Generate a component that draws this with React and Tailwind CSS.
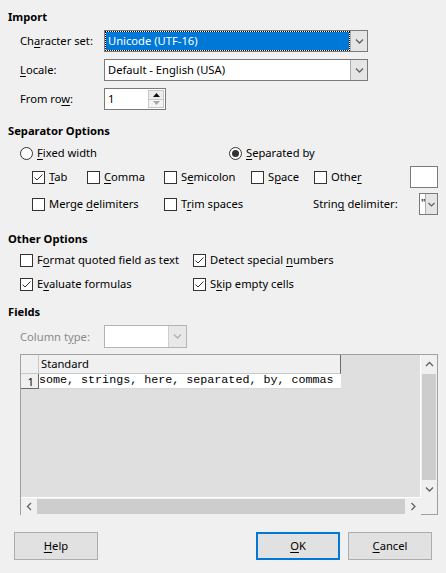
import React from 'react';

// Mnemonic label: underlines one letter like a Windows dialog does.
const Mn = ({ text, at }) => (
    <span className="whitespace-nowrap">
        {text.slice(0, at)}
        <span className="underline underline-offset-[2px]">{text[at]}</span>
        {text.slice(at + 1)}
    </span>
);

const Chevron = ({ dir = 'down', color = '#606060' }) => {
    const d = {
        down: 'M1 1.5 L4.5 5 L8 1.5',
        up: 'M1 5 L4.5 1.5 L8 5',
        left: 'M5 1 L1.5 4.5 L5 8',
        right: 'M1.5 1 L5 4.5 L1.5 8',
    }[dir];
    const box = dir === 'left' || dir === 'right' ? '0 0 7 9' : '0 0 9 7';
    const w = dir === 'left' || dir === 'right' ? 7 : 9;
    const h = dir === 'left' || dir === 'right' ? 9 : 7;
    return (
        <svg width={w} height={h} viewBox={box}>
            <path d={d} fill="none" stroke={color} strokeWidth="1.3" />
        </svg>
    );
};

const Checkbox = ({ checked }) => (
    <span className="w-[13px] h-[13px] shrink-0 border border-[#333333] bg-white flex items-center justify-center">
        {checked && (
            <svg width="11" height="11" viewBox="0 0 11 11">
                <path d="M1.5 5.5 L4 8 L9.5 2.5" fill="none" stroke="#333333" strokeWidth="1" />
            </svg>
        )}
    </span>
);

const Radio = ({ checked }) => (
    <span className="w-[13px] h-[13px] shrink-0 rounded-full border border-[#333333] bg-white flex items-center justify-center">
        {checked && <span className="w-[7px] h-[7px] rounded-full bg-[#333333]" />}
    </span>
);

const CheckItem = ({ checked, children, className = '' }) => (
    <div className={`flex items-center gap-[4px] ${className}`}>
        <Checkbox checked={checked} />
        {children}
    </div>
);

const Combo = ({ value, selected, className = '' }) => (
    <div className={`h-[22px] flex border border-[#7a7a7a] bg-white ${className}`}>
        {selected ? (
            <div className="flex-1 m-[1px] bg-[#0078d7] text-white outline-1 outline-dotted outline-black flex items-center pl-[2px]">
                {value}
            </div>
        ) : (
            <div className="flex-1 flex items-center pl-[3px]">{value}</div>
        )}
        <div className="w-[17px] bg-[#e5e5e5] border-l border-[#adadad] flex items-center justify-center">
            <Chevron />
        </div>
    </div>
);

const Heading = ({ children, className = '' }) => (
    <div className={`font-bold leading-[16px] ${className}`}>{children}</div>
);

const Button = ({ children, primary }) => (
    <button
        className={`w-[84px] h-[28px] bg-[#e1e1e1] flex items-center justify-center ${primary ? 'border-2 border-[#0078d7]' : 'border border-[#adadad]'}`}
    >
        {children}
    </button>
);

export default function App() {
    return (
        <div className="w-[446px] h-[573px] bg-[#f0f0f0] text-[11.2px] text-black font-['Noto_Sans',sans-serif] flex flex-col leading-[16px]">
            <div className="pl-[8px] pr-[8px] pt-[9px] flex flex-col">
                {/* Import */}
                <Heading>Import</Heading>
                <div className="pl-[12px] mt-[5px] flex flex-col gap-[7px]">
                    <div className="flex items-center">
                        <div className="w-[84px]"><Mn text="Character set:" at={2} /></div>
                        <Combo value="Unicode (UTF-16)" selected className="w-[264px]" />
                    </div>
                    <div className="flex items-center">
                        <div className="w-[84px]"><Mn text="Locale:" at={0} /></div>
                        <Combo value="Default - English (USA)" className="w-[264px]" />
                    </div>
                    <div className="flex items-center">
                        <div className="w-[84px]"><Mn text="From row:" at={7} /></div>
                        <div className="w-[62px] h-[22px] border border-[#7a7a7a] bg-white flex items-center pl-[3px]">
                            <span className="flex-1">1</span>
                            <div className="w-[16px] h-[18px] mr-[1px] flex flex-col border border-[#c8c8c8]">
                                <div className="flex-1 bg-[#ececec] border-b border-[#c8c8c8] flex items-center justify-center">
                                    <svg width="7" height="4" viewBox="0 0 7 4"><path d="M0 4 L3.5 0 L7 4 Z" fill="#111" /></svg>
                                </div>
                                <div className="flex-1 bg-[#f4f4f4] flex items-center justify-center">
                                    <svg width="7" height="4" viewBox="0 0 7 4"><path d="M0 0 L3.5 4 L7 0 Z" fill="#a8a8a8" /></svg>
                                </div>
                            </div>
                        </div>
                    </div>
                </div>

                {/* Separator Options */}
                <Heading className="mt-[13px]">Separator Options</Heading>
                <div className="mt-[6px] pl-[12px] flex items-center h-[16px]">
                    <div className="w-[209px] flex items-center gap-[4px]">
                        <Radio />
                        <Mn text="Fixed width" at={0} />
                    </div>
                    <div className="flex items-center gap-[4px]">
                        <Radio checked />
                        <Mn text="Separated by" at={0} />
                    </div>
                </div>
                <div className="mt-[5px] pl-[24px] flex items-center h-[22px]">
                    <CheckItem checked className="w-[55px]"><Mn text="Tab" at={0} /></CheckItem>
                    <CheckItem className="w-[77px]"><Mn text="Comma" at={0} /></CheckItem>
                    <CheckItem className="w-[87px]"><Mn text="Semicolon" at={1} /></CheckItem>
                    <CheckItem className="w-[63px]"><Mn text="Space" at={1} /></CheckItem>
                    <CheckItem className="flex-1"><Mn text="Other" at={4} /></CheckItem>
                    <div className="w-[28px] h-[22px] border border-[#7a7a7a] bg-white" />
                </div>
                <div className="mt-[5px] pl-[24px] flex items-center h-[22px]">
                    <CheckItem className="w-[132px]"><Mn text="Merge delimiters" at={6} /></CheckItem>
                    <CheckItem className="w-[149px]"><Mn text="Trim spaces" at={1} /></CheckItem>
                    <div className="flex-1"><Mn text="String delimiter:" at={5} /></div>
                    <div className="w-[19px] h-[22px] border border-[#7a7a7a] bg-white flex">
                        <span className="w-[5px] pl-[1px] leading-[18px] text-[11px]">"</span>
                        <div className="flex-1 bg-[#e5e5e5] border-l border-[#adadad] flex items-center justify-center">
                            <svg width="7" height="5" viewBox="0 0 7 5"><path d="M0.5 1 L3.5 4 L6.5 1" fill="none" stroke="#606060" strokeWidth="1.2" /></svg>
                        </div>
                    </div>
                </div>

                {/* Other Options */}
                <Heading className="mt-[16px]">Other Options</Heading>
                <div className="mt-[3px] pl-[12px] grid grid-cols-[173px_1fr] gap-y-[4px]">
                    <CheckItem className="h-[20px]"><Mn text="Format quoted field as text" at={1} /></CheckItem>
                    <CheckItem checked className="h-[20px]"><Mn text="Detect special numbers" at={15} /></CheckItem>
                    <CheckItem checked className="h-[20px]"><Mn text="Evaluate formulas" at={1} /></CheckItem>
                    <CheckItem checked className="h-[20px]"><Mn text="Skip empty cells" at={1} /></CheckItem>
                </div>

                {/* Fields */}
                <Heading className="mt-[10px]">Fields</Heading>
                <div className="mt-[5px] pl-[12px] flex items-center">
                    <div className="w-[84px] text-[#8a8a8a]"><Mn text="Column type:" at={8} /></div>
                    <div className="w-[83px] h-[23px] border border-[#b4b4b4] bg-white flex">
                        <div className="flex-1" />
                        <div className="w-[18px] bg-[#e8e8e8] border-l border-[#cfcfcf] flex items-center justify-center">
                            <Chevron color="#b0b0b0" />
                        </div>
                    </div>
                </div>

                {/* Preview grid */}
                <div className="ml-[12px] mt-[6px] w-[418px] h-[161px] border border-b-0 border-[#a0a0a0] flex flex-col">
                    <div className="flex-1 flex min-h-0">
                        <div className="flex-1 bg-[#dfdfdf] border-r border-b border-white">
                            <div className="flex h-[19px]">
                                <div className="w-[18px] bg-[#f0f0f0] border-r border-b border-[#c8c8c8]" />
                                <div className="w-[302px] bg-[#f0f0f0] border-r border-b border-r-[#6a6a6a] border-b-[#c8c8c8] pl-[2px] leading-[18px]">
                                    Standard
                                </div>
                            </div>
                            <div className="flex h-[15px]">
                                <div className="w-[18px] bg-[#f0f0f0] border-r border-b border-[#6a6a6a] text-right pr-[4px] leading-[16px]">1</div>
                                <div className="w-[302px] bg-white border-b border-[#d8d8d8] font-['Liberation_Mono',monospace] text-[11.7px] leading-[13px] whitespace-nowrap">
                                    some, strings, here, separated, by, commas
                                </div>
                            </div>
                        </div>
                        <div className="w-[16px] bg-[#f0f0f0] flex flex-col">
                            <div className="h-[19px] flex items-center justify-center"><Chevron dir="up" /></div>
                            <div className="flex-1 mx-[1px] bg-[#cdcdcd]" />
                            <div className="h-[18px] flex items-center justify-center"><Chevron dir="down" /></div>
                        </div>
                    </div>
                    <div className="h-[17px] flex">
                        <div className="flex-1 bg-[#f0f0f0] flex items-center">
                            <div className="w-[16px] flex items-center justify-center"><Chevron dir="left" /></div>
                            <div className="flex-1 h-[15px] bg-[#cdcdcd]" />
                            <div className="w-[16px] flex items-center justify-center"><Chevron dir="right" /></div>
                        </div>
                        <div className="w-[16px] bg-[#f0f0f0] border-b border-[#a0a0a0]" />
                    </div>
                </div>
            </div>

            {/* Buttons */}
            <div className="mt-[17px] px-[14px] flex items-center">
                <Button><Mn text="Help" at={0} /></Button>
                <div className="flex-1" />
                <Button primary><Mn text="OK" at={0} /></Button>
                <div className="w-[8px]" />
                <Button><Mn text="Cancel" at={0} /></Button>
            </div>
        </div>
    );
}
